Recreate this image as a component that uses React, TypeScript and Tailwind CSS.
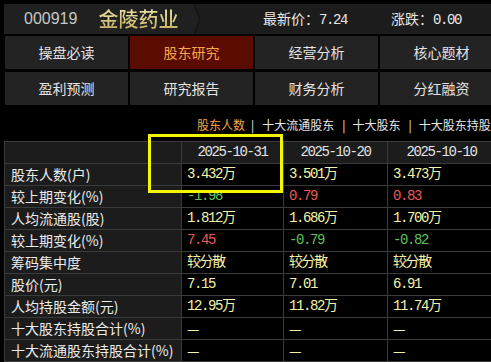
import React from "react";

const mono = "font-['Liberation_Mono','Noto_Sans_CJK_SC',monospace]";
const cjk = "font-['Noto_Sans_CJK_SC',sans-serif]";

type Cell = { v: string; c?: "y" | "g" | "r" };

const rows: { label: string; cells: Cell[] }[] = [
  { label: "股东人数(户)", cells: [{ v: "3.432万" }, { v: "3.501万" }, { v: "3.473万" }] },
  { label: "较上期变化(%)", cells: [{ v: "-1.98", c: "g" }, { v: "0.79", c: "r" }, { v: "0.83", c: "r" }] },
  { label: "人均流通股(股)", cells: [{ v: "1.812万" }, { v: "1.686万" }, { v: "1.700万" }] },
  { label: "较上期变化(%)", cells: [{ v: "7.45", c: "r" }, { v: "-0.79", c: "g" }, { v: "-0.82", c: "g" }] },
  { label: "筹码集中度", cells: [{ v: "较分散" }, { v: "较分散" }, { v: "较分散" }] },
  { label: "股价(元)", cells: [{ v: "7.15" }, { v: "7.01" }, { v: "6.91" }] },
  { label: "人均持股金额(元)", cells: [{ v: "12.95万" }, { v: "11.82万" }, { v: "11.74万" }] },
  { label: "十大股东持股合计(%)", cells: [{ v: "—" }, { v: "—" }, { v: "—" }] },
  { label: "十大流通股东持股合计(%)", cells: [{ v: "—" }, { v: "—" }, { v: "—" }] },
];

const buttons = ["操盘必读", "股东研究", "经营分析", "核心题材", "盈利预测", "研究报告", "财务分析", "分红融资"];

function colorOf(c?: string) {
  if (c === "g") return "text-[#5fc05f]";
  if (c === "r") return "text-[#e85a5a]";
  return "text-[#f4f4a8]";
}

export default function App() {
  return (
    <div className="w-[491px] h-[362px] overflow-hidden bg-black pt-[4px] relative">
      {/* header */}
      <div className="ml-[4px] h-[30px] flex bg-[#1c1c1c] whitespace-nowrap">
        <div className="w-[186px] flex items-center bg-[#202020] pl-[20px]">
          <span className="font-['Liberation_Sans',sans-serif] text-[16px] text-[#c8c8c8]">000919</span>
          <span
            className={`${cjk} ml-[21px] text-[20px] font-medium bg-gradient-to-b from-[#f6eeb4] to-[#c0ab55] bg-clip-text text-transparent`}
          >
            金陵药业
          </span>
        </div>
        <svg width="10" height="30" viewBox="0 0 10 30" className="shrink-0">
          <polygon points="0,0 4,0 10,15 4,30 0,30" fill="#202020" />
          <polyline points="4,0 10,15 4,30" fill="none" stroke="#151515" strokeWidth="1.5" />
        </svg>
        <div className="flex items-center text-[14px] text-[#e8e8e8]">
          <span className="ml-[63px]">
            <span className={cjk}>最新价：</span>
            <span className={`${mono} tracking-[-1.4px]`}>7.24</span>
          </span>
          <span className="ml-[44px]">
            <span className={cjk}>涨跌：</span>
            <span className={`${mono} tracking-[-1.4px]`}>0.00</span>
          </span>
        </div>
      </div>

      {/* nav buttons */}
      <div className="ml-[5px] mt-[2px] grid grid-cols-[123px_123px_123px_123px] gap-x-[2px] gap-y-[3px]">
        {buttons.map((b) => (
          <div
            key={b}
            className={`${cjk} h-[33px] flex items-center justify-center text-[14px] ${
              b === "股东研究" ? "bg-[#5a0c00] text-[#f7a64c]" : "bg-[#232323] text-[#e4e4e4]"
            }`}
          >
            {b}
          </div>
        ))}
      </div>

      {/* sub tabs */}
      <div className={`${cjk} mt-[11px] h-[17px] pl-[197px] flex items-center whitespace-nowrap text-[12px] text-[#e6e6e6]`}>
        <span className="text-[#f2a548]">股东人数</span>
        <span className="ml-[6px]">|</span>
        <span className="ml-[8px]">十大流通股东</span>
        <span className="ml-[8px]">|</span>
        <span className="ml-[7px]">十大股东</span>
        <span className="ml-[8px]">|</span>
        <span className="ml-[7px]">十大股东持股</span>
      </div>

      {/* table */}
      <div className="ml-[4px] mt-[8px] w-[492px] bg-[#3b3b3b] p-px grid grid-cols-[176px_101px_103px_107px] gap-px">
        <div className="h-[21px] bg-[#1c1c1c]" />
        {["2025-10-31", "2025-10-20", "2025-10-10"].map((d) => (
          <div
            key={d}
            className={`${mono} h-[21px] bg-[#1c1c1c] flex items-center justify-center text-[14px] tracking-[-1.4px] text-[#e4e4e4]`}
          >
            {d}
          </div>
        ))}
        {rows.map((r, i) => (
          <React.Fragment key={i}>
            <div className={`${cjk} h-[21px] bg-[#1c1c1c] flex items-center pl-[6px] text-[14px] text-[#ececec] whitespace-nowrap`}>
              {r.label}
            </div>
            {r.cells.map((c, j) => (
              <div
                key={j}
                className={`${c.v === "—" ? cjk : mono} h-[21px] bg-black flex items-center pl-[5px] text-[14px] ${
                  c.v === "—" ? "" : "tracking-[-1.4px]"
                } whitespace-nowrap ${colorOf(c.c)}`}
              >
                {c.v}
              </div>
            ))}
          </React.Fragment>
        ))}
      </div>

      {/* highlight */}
      <div className="absolute left-[148px] top-[134px] w-[135px] h-[59px] border-[3px] border-[#f5f500]" />
    </div>
  );
}
